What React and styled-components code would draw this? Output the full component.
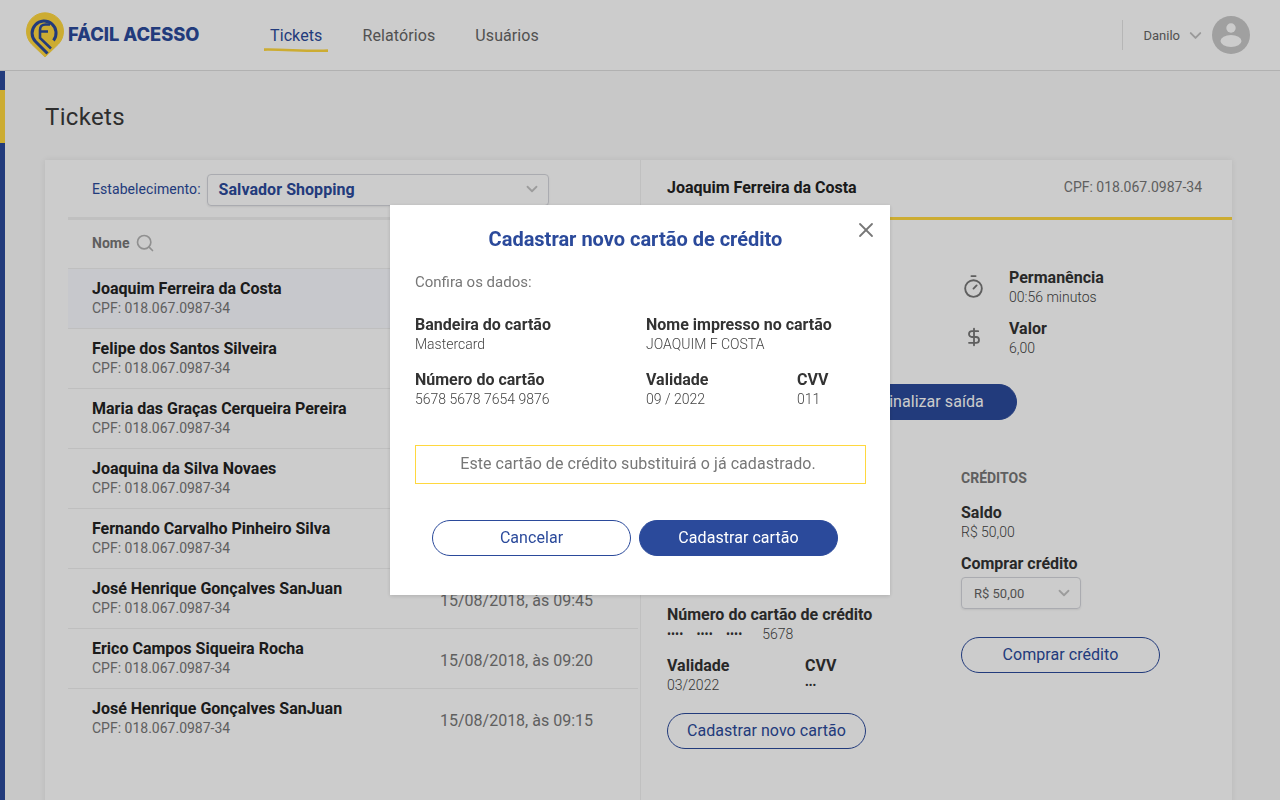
import React from 'react';
import styled, { createGlobalStyle } from 'styled-components';
import { ChevronDown, DollarSign, Search, Timer, X } from 'lucide-react';

const Global = createGlobalStyle`
  html, body { margin: 0; height: 100%; overflow: hidden; background: #fafafa; }
  body { font-family: Roboto, "Liberation Sans", sans-serif; color: #333; }
  * { box-sizing: border-box; }
`;

const BLUE = '#2b4a9b';
const YELLOW = '#ffd83f';

const Page = styled.div`
  width: 1280px; height: 800px; display: flex; flex-direction: column; overflow: hidden;
`;
const Header = styled.header`
  flex: none; height: 71px; background: #fff; border-bottom: 1px solid #dedede;
  display: flex; align-items: center; padding: 0 30px 0 26px;
`;
const Logo = styled.div`display: flex; align-items: center; gap: 4px; width: 244px;`;
const LogoText = styled.span`
  font-family: Inter, sans-serif; font-weight: 800; font-size: 18.3px; letter-spacing: -0.02px;
  color: ${BLUE}; white-space: nowrap; margin-top: -2px;
`;
const Nav = styled.nav`display: flex; gap: 40px; flex: 1; padding-top: 1px;`;
const NavItem = styled.a`
  position: relative; font-size: 16px; letter-spacing: 0.1px; line-height: 20px;
  color: ${p => (p.$active ? BLUE : '#666')};
`;
const NavMark = styled.svg`position: absolute; left: -6px; top: 22px; width: 64px; height: 5px;`;
const UserArea = styled.div`
  display: flex; align-items: center; height: 30px; border-left: 1px solid #e4e4e4; padding-left: 20px;
`;
const UserName = styled.span`font-size: 13px; color: #666; margin-right: 6px;`;
const Avatar = styled.svg`width: 38px; height: 38px; margin-left: 7px; flex: none;`;

const Shell = styled.div`flex: 1; display: flex; min-height: 0;`;
const SideStrip = styled.div`
  flex: none; width: 5px; background: ${BLUE}; padding-top: 19px;
`;
const SideMark = styled.div`height: 53px; background: ${YELLOW};`;
const Main = styled.main`flex: 1; padding: 31px 48px 0 40px; display: flex; flex-direction: column;`;
const Title = styled.h1`
  margin: 0 0 28px; font-weight: 400; font-size: 24px; line-height: 30px; letter-spacing: 0.35px; color: #3a3a3a;
`;
const Panels = styled.div`
  flex: none; height: 700px; display: grid; grid-template-columns: 595px 591px; gap: 1px;
  background: #f0f0f0; box-shadow: 0 0 6px rgba(0,0,0,.08);
`;
const Panel = styled.section`background: #fff; display: flex; flex-direction: column;`;

const FilterRow = styled.div`
  display: flex; align-items: center; gap: 6px; height: 46px; padding: 14px 0 0 47px; margin-bottom: 11px;
`;
const FilterLabel = styled.span`font-size: 14px; letter-spacing: 0.07px; color: ${BLUE}; margin-top: -3px;`;
const Select = styled.div`
  display: flex; align-items: center; justify-content: space-between;
  width: ${p => p.$w}px; height: 32px; border: 1px solid #d5d6dc; border-radius: 4px;
  padding: 0 ${p => p.$pr}px ${p => p.$pb}px ${p => p.$pl}px; box-shadow: 0 1px 2px rgba(0,0,0,.08);
  color: #c4c4c4;
`;
const SelectBig = styled.span`font-size: 16px; font-weight: 700; color: ${BLUE}; letter-spacing: 0.05px;`;
const SelectSmall = styled.span`font-size: 13px; color: #666;`;
const ListWrap = styled.div`margin-left: 23px; border-top: 3px solid #f0f0f0;`;
const ListHead = styled.div`
  height: 48px; padding: 0 0 3px 24px; display: flex; align-items: center; gap: 6px;
  font-size: 14px; font-weight: 700; color: #777;
`;
const Row = styled.div`
  height: 60px; margin-right: 2px; border-top: 1px solid #efefef; padding: 0 45px 0 24px;
  display: flex; justify-content: space-between; align-items: center;
  background: ${p => (p.$active ? '#f9faff' : '#fff')};
`;
const RowMain = styled.div`display: flex; flex-direction: column;`;
const RowName = styled.span`font-size: 16px; font-weight: 700; line-height: 20px; color: #222;`;
const RowCpf = styled.span`font-size: 14px; line-height: 20px; color: #777; margin-top: -1px; margin-bottom: 1px;`;
const RowDate = styled.span`font-size: 16px; color: #777; margin-top: 3px;`;

const RightHead = styled.div`
  height: 60px; padding: 0 30px 3px 26px; display: flex; align-items: center; justify-content: space-between;
  border-bottom: 3px solid ${YELLOW};
`;
const RightName = styled.span`font-size: 16px; font-weight: 700; color: #222;`;
const RightCpf = styled.span`font-size: 14px; color: #777;`;
const RightBody = styled.div`padding: 48px 30px 0 26px; display: flex; flex-direction: column;`;
const InfoCol = styled.div`margin-left: 294px; display: flex; flex-direction: column; gap: 12px;`;
const InfoRow = styled.div`display: flex; align-items: center;`;
const InfoIcon = styled.div`
  width: 26px; margin: 0 22px ${p => p.$lift || 0}px 0; padding-right: 1px; display: flex; justify-content: center; color: #777;
`;
const Label = styled.div`font-size: 16px; font-weight: 700; line-height: 20px; color: #333; white-space: nowrap;`;
const Value = styled.div`font-size: 14px; font-weight: 300; line-height: 19px; color: #444; white-space: nowrap;`;
const Pill = styled.button`
  width: ${p => p.$w || 199}px; height: 36px; border-radius: 18px; font: 400 16px Roboto, sans-serif;
  letter-spacing: 0.05px; cursor: pointer; padding: 0 0 2px;
  border: 1px solid ${BLUE}; background: ${p => (p.$solid ? BLUE : '#fff')}; color: ${p => (p.$solid ? '#fff' : BLUE)};
`;
const FinishRow = styled.div`display: flex; justify-content: flex-end; margin: 26px 185px 48px 0;`;
const Columns = styled.div`display: grid; grid-template-columns: 294px 1fr;`;
const CardCol = styled.div`padding-top: 137px; display: flex; flex-direction: column;`;
const Dots = styled.div`display: flex; align-items: center; height: 19px;`;
const DotGroup = styled.span`
  width: 29.5px; font-size: 12px; color: #333; line-height: 19px; margin-top: -1px;
`;
const Pair = styled.div`display: grid; grid-template-columns: 138px 1fr; margin: 12px 0 18px;`;
const DotsValue = styled.div`font-size: 11px; line-height: 19px; color: #333;`;
const SectionTitle = styled.div`font-size: 14px; font-weight: 700; line-height: 20px; color: #777; margin-bottom: 15px;`;
const Gap = styled.div`height: ${p => p.$h}px;`;

const Overlay = styled.div`
  position: fixed; inset: 0; background: rgba(0,0,0,.2); display: flex; align-items: center; justify-content: center;
`;
const Modal = styled.div`
  position: relative; width: 500px; height: 390px; background: #fff; padding: 22px 24px 0 25px;
  box-shadow: 0 1px 4px rgba(0,0,0,.15);
`;
const ModalTitle = styled.h2`
  margin: 0 0 21px; padding-right: 10px; text-align: center; font-size: 20px; font-weight: 700; line-height: 24px; color: ${BLUE};
`;
const CloseBtn = styled.div`position: absolute; top: 13px; right: 12px; display: flex; color: #777;`;
const Intro = styled.div`font-size: 15px; line-height: 20px; color: #777; margin-bottom: 23px;`;
const DataGrid = styled.div`
  display: grid; grid-template-columns: 231px 151px 1fr; row-gap: 16px;
`;
const Wide = styled.div`grid-column: span 2;`;
const Notice = styled.div`
  margin-top: 36px; height: 39px; border: 1px solid ${YELLOW}; display: flex; align-items: center; justify-content: center;
  padding: 0 5px 2px 0; font-size: 16px; letter-spacing: 0.05px; color: #777;
`;
const ModalActions = styled.div`display: flex; gap: 8px; margin: 36px 0 0 17px;`;

const people = [
  ['Joaquim Ferreira da Costa'],
  ['Felipe dos Santos Silveira'],
  ['Maria das Graças Cerqueira Pereira'],
  ['Joaquina da Silva Novaes'],
  ['Fernando Carvalho Pinheiro Silva'],
  ['José Henrique Gonçalves SanJuan', '15/08/2018, às 09:45'],
  ['Erico Campos Siqueira Rocha', '15/08/2018, às 09:20'],
  ['José Henrique Gonçalves SanJuan', '15/08/2018, às 09:15'],
];

const PinLogo = () => (
  <svg width="38" height="46" viewBox="0 0 38 46" fill="none">
    <path d="M19 45 L5.5 32 A18.5 18.5 0 1 1 32.5 32 Z" fill={YELLOW} stroke={YELLOW} strokeLinejoin="round" />
    <path d="M21.5 41.5 L9.5 29.5 A12 12 0 1 1 27.5 28.5" stroke={BLUE} strokeWidth="3" strokeLinejoin="round" />
    <path d="M25 36.5 L14 26 V18 Q14 12.5 19.5 12.5 H24 M14 19.5 H22" stroke={BLUE} strokeWidth="2.6" />
  </svg>
);

export default function App() {
  return (
    <>
      <Global />
      <Page>
        <Header>
          <Logo>
            <PinLogo />
            <LogoText>FÁCIL ACESSO</LogoText>
          </Logo>
          <Nav>
            <NavItem $active>
              Tickets
              <NavMark viewBox="0 0 64 5">
                <path d="M0 1.6 C20 1.2 44 3.6 64 2.6" stroke={YELLOW} strokeWidth="2.6" fill="none" />
              </NavMark>
            </NavItem>
            <NavItem>Relatórios</NavItem>
            <NavItem>Usuários</NavItem>
          </Nav>
          <UserArea>
            <UserName>Danilo</UserName>
            <ChevronDown size={19} color="#c0c0c0" strokeWidth={2.4} />
            <Avatar viewBox="0 0 38 38">
              <circle cx="19" cy="19" r="19" fill="#c8c8c8" />
              <circle cx="19" cy="12" r="4.7" fill="#fff" />
              <ellipse cx="19" cy="25" rx="10.5" ry="6" fill="#fff" />
            </Avatar>
          </UserArea>
        </Header>
        <Shell>
          <SideStrip><SideMark /></SideStrip>
          <Main>
            <Title>Tickets</Title>
            <Panels>
              <Panel>
                <FilterRow>
                  <FilterLabel>Estabelecimento:</FilterLabel>
                  <Select $w={342} $pl={11} $pr={7} $pb={2}>
                    <SelectBig>Salvador Shopping</SelectBig>
                    <ChevronDown size={18} strokeWidth={2.4} />
                  </Select>
                </FilterRow>
                <ListWrap>
                  <ListHead>Nome <Search size={20} color="#b5b5b5" /></ListHead>
                  {people.map(([name, date], i) => (
                    <Row key={i} $active={i === 0}>
                      <RowMain>
                        <RowName>{name}</RowName>
                        <RowCpf>CPF: 018.067.0987-34</RowCpf>
                      </RowMain>
                      {date && <RowDate>{date}</RowDate>}
                    </Row>
                  ))}
                </ListWrap>
              </Panel>
              <Panel>
                <RightHead>
                  <RightName>Joaquim Ferreira da Costa</RightName>
                  <RightCpf>CPF: 018.067.0987-34</RightCpf>
                </RightHead>
                <RightBody>
                  <InfoCol>
                    <InfoRow>
                      <InfoIcon $lift={2}><Timer size={25} strokeWidth={1.8} /></InfoIcon>
                      <div><Label>Permanência</Label><Value>00:56 minutos</Value></div>
                    </InfoRow>
                    <InfoRow>
                      <InfoIcon $lift={4}><DollarSign size={20} strokeWidth={2.2} /></InfoIcon>
                      <div><Label>Valor</Label><Value>6,00</Value></div>
                    </InfoRow>
                  </InfoCol>
                  <FinishRow><Pill $solid $w={170}>Finalizar saída</Pill></FinishRow>
                  <Columns>
                    <CardCol>
                      <Label>Número do cartão de crédito</Label>
                      <Dots>
                        <DotGroup>••••</DotGroup><DotGroup>••••</DotGroup><DotGroup>••••</DotGroup>
                        <Value>&nbsp;&nbsp;5678</Value>
                      </Dots>
                      <Pair>
                        <div><Label>Validade</Label><Value>03/2022</Value></div>
                        <div><Label>CVV</Label><DotsValue>•••</DotsValue></div>
                      </Pair>
                      <Pill>Cadastrar novo cartão</Pill>
                    </CardCol>
                    <div>
                      <SectionTitle>CRÉDITOS</SectionTitle>
                      <Label>Saldo</Label>
                      <Value>R$ 50,00</Value>
                      <Gap $h={12} />
                      <Label>Comprar crédito</Label>
                      <Gap $h={3} />
                      <Select $w={120} $pl={12} $pr={7} $pb={0}>
                        <SelectSmall>R$ 50,00</SelectSmall>
                        <ChevronDown size={18} strokeWidth={2.4} />
                      </Select>
                      <Gap $h={28} />
                      <Pill>Comprar crédito</Pill>
                    </div>
                  </Columns>
                </RightBody>
              </Panel>
            </Panels>
          </Main>
        </Shell>
      </Page>
      <Overlay>
        <Modal>
          <ModalTitle>Cadastrar novo cartão de crédito</ModalTitle>
          <CloseBtn><X size={24} strokeWidth={1.8} /></CloseBtn>
          <Intro>Confira os dados:</Intro>
          <DataGrid>
            <div><Label>Bandeira do cartão</Label><Value>Mastercard</Value></div>
            <Wide><Label>Nome impresso no cartão</Label><Value>JOAQUIM F COSTA</Value></Wide>
            <div><Label>Número do cartão</Label><Value>5678 5678 7654 9876</Value></div>
            <div><Label>Validade</Label><Value>09 / 2022</Value></div>
            <div><Label>CVV</Label><Value>011</Value></div>
          </DataGrid>
          <Notice>Este cartão de crédito substituirá o já cadastrado.</Notice>
          <ModalActions>
            <Pill>Cancelar</Pill>
            <Pill $solid>Cadastrar cartão</Pill>
          </ModalActions>
        </Modal>
      </Overlay>
    </>
  );
}
